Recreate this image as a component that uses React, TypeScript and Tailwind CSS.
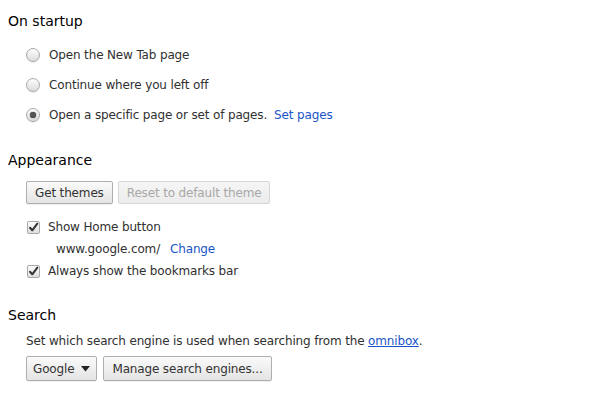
import React from "react";

function Radio({ checked }: { checked?: boolean }) {
  return (
    <span className="relative flex h-[14px] w-[14px] items-center justify-center rounded-full border border-[#a9a9a9] bg-gradient-to-b from-[#fdfdfd] to-[#dcdcdc] shadow-[0_1px_1px_rgba(0,0,0,0.08)]">
      {checked && (
        <span className="h-[6px] w-[6px] rounded-full bg-[#555] shadow-[0_0_1px_#222]" />
      )}
    </span>
  );
}

function Checkbox() {
  return (
    <span className="flex h-[13px] w-[13px] items-center justify-center rounded-[2px] border border-[#a9a9a9] bg-gradient-to-b from-[#fdfdfd] to-[#dedede]">
      <svg width="11" height="11" viewBox="0 0 11 11">
        <path
          d="M2 5.8 L4.3 8.3 L9.3 1.6"
          fill="none"
          stroke="#333"
          strokeWidth="2"
          strokeLinecap="round"
          strokeLinejoin="round"
        />
      </svg>
    </span>
  );
}

function Button({
  children,
  disabled,
  className = "",
}: {
  children: React.ReactNode;
  disabled?: boolean;
  className?: string;
}) {
  return (
    <button
      className={
        "flex items-center rounded-[2px] border px-[8px] " +
        (disabled
          ? "border-[#d6d6d6] bg-gradient-to-b from-[#f5f5f5] to-[#ececec] text-[#a8a8a8] "
          : "border-[#aeaeae] bg-gradient-to-b from-[#fafafa] to-[#e4e4e4] text-[#333] shadow-[0_1px_0_rgba(0,0,0,0.06)] ") +
        className
      }
    >
      {children}
    </button>
  );
}

export default function App() {
  return (
    <div
      className="min-h-[397px] w-[607px] bg-white px-2 pt-[10px] text-[12px] tracking-[-0.15px] text-[#303030]"
      style={{ fontFamily: '"DejaVu Sans", Verdana, sans-serif' }}
    >
      <h3 className="flex h-[22px] items-center text-[14px] tracking-normal text-black">On startup</h3>
      <div className="mt-[8px] pl-[18px]">
        <div className="flex h-[30px] items-center gap-[9px]">
          <Radio />
          <span>Open the New Tab page</span>
        </div>
        <div className="flex h-[30px] items-center gap-[9px]">
          <Radio />
          <span>Continue where you left off</span>
        </div>
        <div className="flex h-[30px] items-center gap-[9px]">
          <Radio checked />
          <span>Open a specific page or set of pages.</span>
          <span className="-ml-[2px] text-[#1a55c8]">Set pages</span>
        </div>
      </div>

      <h3 className="mt-[19px] flex h-[22px] items-center text-[14px] tracking-normal text-black">Appearance</h3>
      <div className="pl-[18px]">
        <div className="mt-[10px] flex gap-[5px]">
          <Button className="h-[23px]">Get themes</Button>
          <Button disabled className="h-[23px]">
            Reset to default theme
          </Button>
        </div>
        <div className="mt-[12px] flex h-[22px] items-center gap-[8px] pl-[1px]">
          <Checkbox />
          <span>Show Home button</span>
        </div>
        <div className="flex h-[22px] items-center pl-[30px]">
          <span>www.google.com/</span>
          <span className="ml-[10px] text-[#1a55c8]">Change</span>
        </div>
        <div className="flex h-[22px] items-center gap-[8px] pl-[1px]">
          <Checkbox />
          <span>Always show the bookmarks bar</span>
        </div>
      </div>

      <h3 className="mt-[22px] flex h-[22px] items-center text-[14px] tracking-normal text-black">Search</h3>
      <div className="pl-[18px]">
        <div className="mt-[6px] flex h-[18px] items-center">
          Set which search engine is used when searching from the&nbsp;
          <span className="text-[#1a55c8] underline">omnibox</span>.
        </div>
        <div className="mt-[6px] flex gap-[6px]">
          <Button className="h-[25px] gap-[7px] pl-[6px] pr-[6px]">
            <span>Google</span>
            <svg width="9" height="6" viewBox="0 0 9 6">
              <path d="M0 0 H9 L4.5 5.5 Z" fill="#222" />
            </svg>
          </Button>
          <Button className="h-[25px]">Manage search engines...</Button>
        </div>
      </div>
    </div>
  );
}
